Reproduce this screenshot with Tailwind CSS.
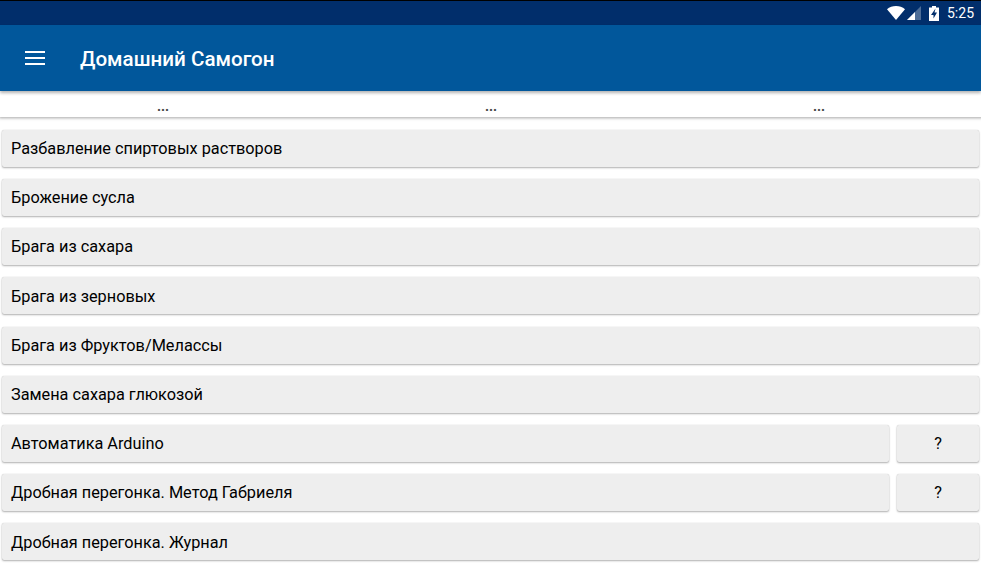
<!DOCTYPE html>
<html lang="ru">
<head>
    <meta charset="UTF-8">
    <meta name="viewport" content="width=device-width, initial-scale=1.0">
    <title>Домашний Самогон</title>
    <script src="https://cdn.jsdelivr.net/npm/@tailwindcss/browser@4"></script>
</head>
<body class="w-[981px] h-[565px] overflow-hidden bg-white font-['Roboto',sans-serif]">
    <!-- Status bar -->
    <div class="h-[25px] bg-[#012e6b] border-t border-black flex items-center justify-end pr-[7px] text-white">
      <svg class="w-[18px] h-[14px]" viewBox="0 0 18 14"><path d="M0 3.200C2.500 1.200 5.600 0 9 0s6.500 1.200 9 3.200L9 14z" fill="#fff"/></svg>
      <svg class="w-[14px] h-[14px] ml-[2px]" viewBox="0 0 14 14"><path d="M14 0v14H0z" fill="#fff" fill-opacity=".3"/><path d="M8 6V14H0z" fill="#fff"/></svg>
      <svg class="w-[10px] h-[15px] ml-[8px]" viewBox="0 0 10 15"><path d="M3 0h4v1.500h3V15H0V1.500h3z" fill="#fff"/><path d="M6.500 2.500 2 9H4.500v3.500L8 6.500H5.500z" fill="#012e6b"/></svg>
      <span class="ml-[8px] text-[14px] leading-none">5:25</span>
    </div>
    <!-- App bar -->
    <header class="relative z-20 h-[66px] bg-[#01579b] flex items-center shadow-[0_2px_3px_rgba(0,0,0,0.3)] text-white">
      <svg class="w-[20px] h-[14px] ml-[25px]" viewBox="0 0 20 14" fill="#fff">
        <rect y="0" width="20" height="2"/><rect y="6" width="20" height="2"/><rect y="12" width="20" height="2"/>
      </svg>
      <h1 class="ml-[35px] pt-[2px] text-[20.600px] font-medium">Домашний Самогон</h1>
    </header>
    <!-- Tabs -->
    <div class="relative z-10 w-[984px] -ml-[1px] h-[26px] bg-white grid grid-cols-3 shadow-[0_1px_3px_rgba(0,0,0,0.35)] text-[14px] font-bold text-[#444] leading-[30px] text-center">
      <span class="h-[26px] overflow-hidden">...</span>
      <span class="h-[26px] overflow-hidden">...</span>
      <span class="h-[26px] overflow-hidden">...</span>
    </div>
    <!-- Menu -->
    <main class="flex flex-col gap-[12.200px] pt-[12.800px] px-[2px] text-[16.300px] text-black">
      <div class="h-[37px] bg-[#eeeeee] rounded-[2px] shadow-[0_1px_2px_rgba(0,0,0,0.3),0_0_1px_rgba(0,0,0,0.2)] pl-[9px] pt-[2px] flex items-center">Разбавление спиртовых растворов</div>
      <div class="h-[37px] bg-[#eeeeee] rounded-[2px] shadow-[0_1px_2px_rgba(0,0,0,0.3),0_0_1px_rgba(0,0,0,0.2)] pl-[9px] pt-[2px] flex items-center">Брожение сусла</div>
      <div class="h-[37px] bg-[#eeeeee] rounded-[2px] shadow-[0_1px_2px_rgba(0,0,0,0.3),0_0_1px_rgba(0,0,0,0.2)] pl-[9px] pt-[2px] flex items-center">Брага из сахара</div>
      <div class="h-[37px] bg-[#eeeeee] rounded-[2px] shadow-[0_1px_2px_rgba(0,0,0,0.3),0_0_1px_rgba(0,0,0,0.2)] pl-[9px] pt-[2px] flex items-center">Брага из зерновых</div>
      <div class="h-[37px] bg-[#eeeeee] rounded-[2px] shadow-[0_1px_2px_rgba(0,0,0,0.3),0_0_1px_rgba(0,0,0,0.2)] pl-[9px] pt-[2px] flex items-center">Брага из Фруктов/Мелассы</div>
      <div class="h-[37px] bg-[#eeeeee] rounded-[2px] shadow-[0_1px_2px_rgba(0,0,0,0.3),0_0_1px_rgba(0,0,0,0.2)] pl-[9px] pt-[2px] flex items-center">Замена сахара глюкозой</div>
      <div class="flex gap-[8px]">
        <div class="flex-1 h-[37px] bg-[#eeeeee] rounded-[2px] shadow-[0_1px_2px_rgba(0,0,0,0.3),0_0_1px_rgba(0,0,0,0.2)] pl-[9px] pt-[2px] flex items-center">Автоматика Arduino</div>
        <div class="w-[82px] h-[37px] bg-[#eeeeee] rounded-[2px] shadow-[0_1px_2px_rgba(0,0,0,0.3),0_0_1px_rgba(0,0,0,0.2)] pt-[2px] flex items-center justify-center">?</div>
      </div>
      <div class="flex gap-[8px]">
        <div class="flex-1 h-[37px] bg-[#eeeeee] rounded-[2px] shadow-[0_1px_2px_rgba(0,0,0,0.3),0_0_1px_rgba(0,0,0,0.2)] pl-[9px] pt-[2px] flex items-center">Дробная перегонка. Метод Габриеля</div>
        <div class="w-[82px] h-[37px] bg-[#eeeeee] rounded-[2px] shadow-[0_1px_2px_rgba(0,0,0,0.3),0_0_1px_rgba(0,0,0,0.2)] pt-[2px] flex items-center justify-center">?</div>
      </div>
      <div class="h-[37px] bg-[#eeeeee] rounded-[2px] shadow-[0_1px_2px_rgba(0,0,0,0.3),0_0_1px_rgba(0,0,0,0.2)] pl-[9px] pt-[2px] flex items-center">Дробная перегонка. Журнал</div>
    </main>
</body>
</html>
